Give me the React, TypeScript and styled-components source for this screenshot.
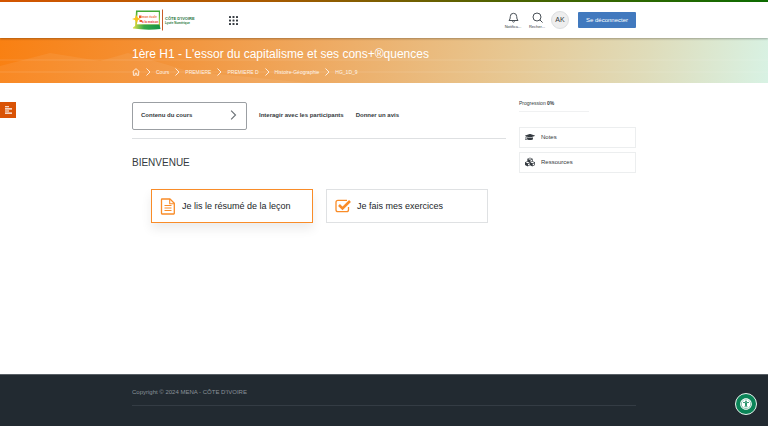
import React from "react";
import styled, { createGlobalStyle } from "styled-components";
import { FaGraduationCap, FaCubes, FaUniversalAccess } from "react-icons/fa";

const GlobalStyle = createGlobalStyle`
  *, *::before, *::after { box-sizing: border-box; }
  body { margin: 0; background: #fff; color: #343a40; font-family: "Liberation Sans", Arial, sans-serif; font-size: 6px; }
  button { font: inherit; color: inherit; border: 0; padding: 0; background: none; cursor: pointer; }
  a { color: inherit; text-decoration: none; }
  h1, h2, p { margin: 0; font-weight: 400; }
  svg { display: block; flex: none; }
`;

const Page = styled.div`
  min-height: 100vh;
  display: flex;
  flex-direction: column;
`;

const Container = styled.div`
  width: 100%;
  max-width: 504px;
  margin: 0 auto;
`;

const Header = styled.header`
  position: relative;
  z-index: 1;
  background: #fff;
  box-shadow: 0 1px 2px rgba(0, 0, 0, 0.3);
  &::before {
    content: "";
    display: block;
    height: 2px;
    background: linear-gradient(90deg, #d45500, #a85a00 35%, #4f6200 65%, #0c6b00);
  }
`;

const HeaderRow = styled(Container)`
  height: 36px;
  display: flex;
  align-items: center;
`;

const LogoLink = styled.a`
  display: flex;
  margin-right: 27px;
`;

const GridButton = styled.button`
  display: flex;
  margin-right: auto;
`;

const ToolButton = styled.button`
  width: 24px;
  display: flex;
  flex-direction: column;
  align-items: center;
  gap: 1px;
  font-size: 4px;
  line-height: 5px;
  color: #343a40;
`;

const Avatar = styled.button`
  width: 18px;
  height: 18px;
  margin: 0 9px 0 2px;
  border: 1px solid #dcdee0;
  border-radius: 50%;
  background: #eee;
  font-size: 7px;
  line-height: 16px;
`;

const LogoutButton = styled.button`
  width: 58px;
  height: 16px;
  border-radius: 1px;
  background: #4179be;
  color: #fff;
  font-size: 6px;
  line-height: 16px;
  white-space: nowrap;
`;

const Banner = styled.section`
  position: relative;
  height: 45px;
  background: linear-gradient(100deg, #f98012 0%, #f48f32 18%, #eeaa62 42%, #e7c792 66%, #dfdcba 84%, #d8f2e4 100%);
  color: #fff;
`;

const BannerArt = styled.svg`
  position: absolute;
  inset: 0;
  width: 100%;
  height: 100%;
`;

const BannerContent = styled(Container)`
  position: relative;
  padding-top: 8px;
`;

const Title = styled.h1`
  font-size: 12px;
  line-height: 16px;
`;

const Crumbs = styled.nav`
  display: flex;
  align-items: center;
  gap: 4px;
  margin-top: 6px;
  font-size: 5px;
  line-height: 8px;
  color: rgba(255, 255, 255, 0.9);
`;

const DrawerButton = styled.button`
  position: absolute;
  left: 0;
  top: 102px;
  width: 16px;
  height: 16px;
  display: flex;
  align-items: center;
  justify-content: center;
  background: #d95204;
  color: #fff;
`;

const Main = styled(Container)`
  flex: 1;
  display: flex;
  gap: 13px;
  padding-top: 19px;
`;

const Course = styled.main`
  flex: 1;
  min-width: 0;
`;

const Tabs = styled.nav`
  display: flex;
  align-items: flex-start;
  gap: 12px;
  padding-bottom: 8px;
  border-bottom: 1px solid #dee0e2;
  font-size: 6px;
  font-weight: 700;
`;

const ContentTab = styled.button`
  width: 115px;
  height: 28px;
  display: flex;
  align-items: center;
  justify-content: space-between;
  padding: 0 8px 2px;
  border: 1px solid #9b9fa3;
  border-radius: 2px;
  & svg { color: #6a7076; }
`;

const TabLink = styled.a`
  line-height: 26px;
`;

const Heading = styled.h2`
  margin-top: 17px;
  font-size: 10px;
  line-height: 14px;
`;

const Activities = styled.div`
  display: grid;
  grid-template-columns: 1fr 1fr;
  gap: 13px;
  margin: 19px 18px 0 19px;
`;

const Activity = styled.a<{ $active?: boolean }>`
  height: 34px;
  display: flex;
  align-items: center;
  gap: 6px;
  padding: 0 8px;
  border: 1px solid ${(p) => (p.$active ? "#f98c28" : "#dfe1e3")};
  box-shadow: ${(p) => (p.$active ? "0 6px 10px rgba(0, 0, 0, 0.08)" : "none")};
  color: #212529;
  font-size: 9px;
  line-height: 10px;
  white-space: nowrap;
`;

const Sidebar = styled.aside`
  width: 117px;
`;

const Progress = styled.p`
  width: 70px;
  padding-bottom: 4px;
  margin-bottom: 15px;
  border-bottom: 1px solid #f0f1f2;
  margin-top: -2px;
  font-size: 5px;
  line-height: 7px;
  white-space: nowrap;
`;

const SideLink = styled.a`
  height: 21px;
  display: flex;
  align-items: center;
  gap: 6px;
  margin-bottom: 4px;
  padding: 0 5px 2px;
  border: 1px solid #eceeef;
  font-size: 6px;
`;

const Footer = styled.footer`
  height: 52px;
  padding-top: 14px;
  background: #222a31;
  color: #8a9299;
  border-top: 1px solid #596066;
`;

const Copyright = styled.p`
  padding-bottom: 9px;
  border-bottom: 1px solid #343c44;
  font-size: 6px;
  line-height: 7px;
`;

const AccessButton = styled.button`
  position: fixed;
  right: 11px;
  bottom: 11px;
  width: 22px;
  height: 22px;
  display: flex;
  align-items: center;
  justify-content: center;
  border: 1px solid #e8f3ee;
  border-radius: 50%;
  background: #0b8457;
  color: #fff;
`;

const Logo = () => (
  <svg width="70" height="24" viewBox="0 0 70 24" role="img" aria-label="Mon école à la maison, Côte d'Ivoire, Lycée Numérique">
    <defs>
      <linearGradient id="screen" x2="0" y2="1">
        <stop offset="0" stopColor="#3aa535" />
        <stop offset=".55" stopColor="#8fc641" />
        <stop offset="1" stopColor="#f5d12b" />
      </linearGradient>
      <linearGradient id="base">
        <stop stopColor="#dbe04a" />
        <stop offset=".4" stopColor="#37a849" />
        <stop offset="1" stopColor="#129447" />
      </linearGradient>
    </defs>
    <path d="M4 2.500h24V19H3z" fill="url(#screen)" />
    <path d="M5.500 4h21.300v12.500H5z" fill="#fff" />
    <path d="M1 19.500 5 16.500h22.500l1 4.500Q15 22.500 1 20.500z" fill="url(#base)" />
    <path d="m0 11 3-1 1-3 2 3 3 1-3 1-1 3-2-3z" fill="#f9c31a" />
    <path d="M7 7.500h2.500V10H7zM7.500 12H10v2H7.500z" fill="#ef5a31" />
    <g fontFamily="Liberation Sans" fontWeight="700">
      <text x="10" y="10" fontSize="3" fill="#ef6a3a">mon école</text>
      <text x="10" y="14.500" fontSize="3" fill="#e32f2f">à la maison</text>
      <text x="33" y="11.500" fontSize="4" fill="#28753c">CÔTE D'IVOIRE</text>
      <text x="33" y="16" fontSize="3" fill="#28753c">Lycée Numérique</text>
    </g>
    <path d="M30.500 1.500v21" stroke="#c95b28" />
  </svg>
);

const AppsIcon = () => (
  <svg width="9" height="9" viewBox="0 0 9 9" fill="#343a40">
    {[0, 3.5, 7].map((y) => [0, 3.5, 7].map((x) => <rect key={`${x}-${y}`} x={x} y={y} width="2" height="2" rx=".6" />))}
  </svg>
);

const BellIcon = () => (
  <svg width="11" height="11" viewBox="0 0 11 11" fill="none" stroke="#495057">
    <path d="M1 8.500Q2.300 7.500 2.300 4.500a3.200 3.200 0 0 1 6.400 0Q8.700 7.500 10 8.500zM4.300 9.500q1.200 1.300 2.400 0" />
  </svg>
);

const SearchIcon = () => (
  <svg width="11" height="11" viewBox="0 0 11 11" fill="none" stroke="#495057">
    <circle cx="5" cy="5" r="4" />
    <path d="m8 8 2.300 2.300" strokeLinecap="round" />
  </svg>
);

const HomeIcon = () => (
  <svg width="8" height="8" viewBox="0 0 7 7" fill="none" stroke="#fff" strokeWidth=".7">
    <path d="M.5 3.300 3.500.6l3 2.700M1.200 3v3.400h1.600V4.600h1.400v1.800h1.600V3" />
  </svg>
);

const Chevron = ({ size = 8 }: { size?: number }) => (
  <svg width={size} height={size} viewBox="0 0 8 8" fill="none" stroke="currentColor" strokeWidth=".9">
    <path d="m2.500.5 3.500 3.500-3.500 3.500" />
  </svg>
);

const DrawerIcon = () => (
  <svg width="8" height="8" viewBox="0 0 8 8" stroke="currentColor" strokeWidth="1.100">
    <path d="M1 .8h4M1 2.900h7M1 5h4M1 7.100h7" />
  </svg>
);

const DocumentIcon = () => (
  <svg width="16" height="17" viewBox="0 0 16 17" fill="none" stroke="#f98c28" strokeLinejoin="round">
    <path d="M2 1h8l4.300 4.300v10.200q0 .5-.5.5H2q-.5 0-.5-.5v-14q0-.5.5-.5z" strokeWidth="1.300" />
    <path d="M9.700 1v4.700h4.600M4.500 7.500h7M4.500 10h7M4.500 12.500h7" strokeWidth="1.100" />
  </svg>
);

const CheckIcon = () => (
  <svg width="16" height="16" viewBox="0 0 16 16" fill="none" stroke="#f98c28">
    <path d="M12 2.300H3a2 2 0 0 0-2 2v7.400a2 2 0 0 0 2 2h8.500a2 2 0 0 0 2-2V9" strokeWidth="1.300" />
    <path d="m4 7 3.500 3.500L15 3" strokeWidth="2.600" />
  </svg>
);

const crumbs = ["Cours", "PREMIERE", "PREMIERE D", "Histoire-Géographie", "HG_1D_9"];

export default function App() {
  return (
    <Page>
      <GlobalStyle />
      <Header>
        <HeaderRow>
          <LogoLink href="#"><Logo /></LogoLink>
          <GridButton aria-label="Applications"><AppsIcon /></GridButton>
          <ToolButton><BellIcon />Notifica...</ToolButton>
          <ToolButton><SearchIcon />Recher...</ToolButton>
          <Avatar>AK</Avatar>
          <LogoutButton>Se déconnecter</LogoutButton>
        </HeaderRow>
      </Header>
      <Banner>
        <BannerArt viewBox="0 0 768 45" preserveAspectRatio="none" aria-hidden="true">
          <path d="M0 28 50 15l50 8 28-8 60 18 120 12H0z" fill="#fff" opacity=".07" />
          <path d="M0 22h768M0 34h768" stroke="#fff" opacity=".12" />
        </BannerArt>
        <BannerContent>
          <Title>1ère H1 - L'essor du capitalisme et ses cons+®quences</Title>
          <Crumbs aria-label="Fil d'Ariane">
            <a href="#" aria-label="Accueil"><HomeIcon /></a>
            {crumbs.map((c) => (
              <React.Fragment key={c}>
                <Chevron />
                <a href="#">{c}</a>
              </React.Fragment>
            ))}
          </Crumbs>
        </BannerContent>
      </Banner>
      <DrawerButton aria-label="Ouvrir le sommaire"><DrawerIcon /></DrawerButton>
      <Main>
        <Course>
          <Tabs>
            <ContentTab>Contenu du cours<Chevron size={10} /></ContentTab>
            <TabLink href="#">Interagir avec les participants</TabLink>
            <TabLink href="#">Donner un avis</TabLink>
          </Tabs>
          <Heading>BIENVENUE</Heading>
          <Activities>
            <Activity href="#" $active><DocumentIcon />Je lis le résumé de la leçon</Activity>
            <Activity href="#"><CheckIcon />Je fais mes exercices</Activity>
          </Activities>
        </Course>
        <Sidebar>
          <Progress>Progression <b>0%</b></Progress>
          <SideLink href="#"><FaGraduationCap size={10} />Notes</SideLink>
          <SideLink href="#"><FaCubes size={10} />Ressources</SideLink>
        </Sidebar>
      </Main>
      <Footer>
        <Container><Copyright>Copyright © 2024 MENA - CÔTE D'IVOIRE</Copyright></Container>
      </Footer>
      <AccessButton aria-label="Accessibilité"><FaUniversalAccess size={12} /></AccessButton>
    </Page>
  );
}
